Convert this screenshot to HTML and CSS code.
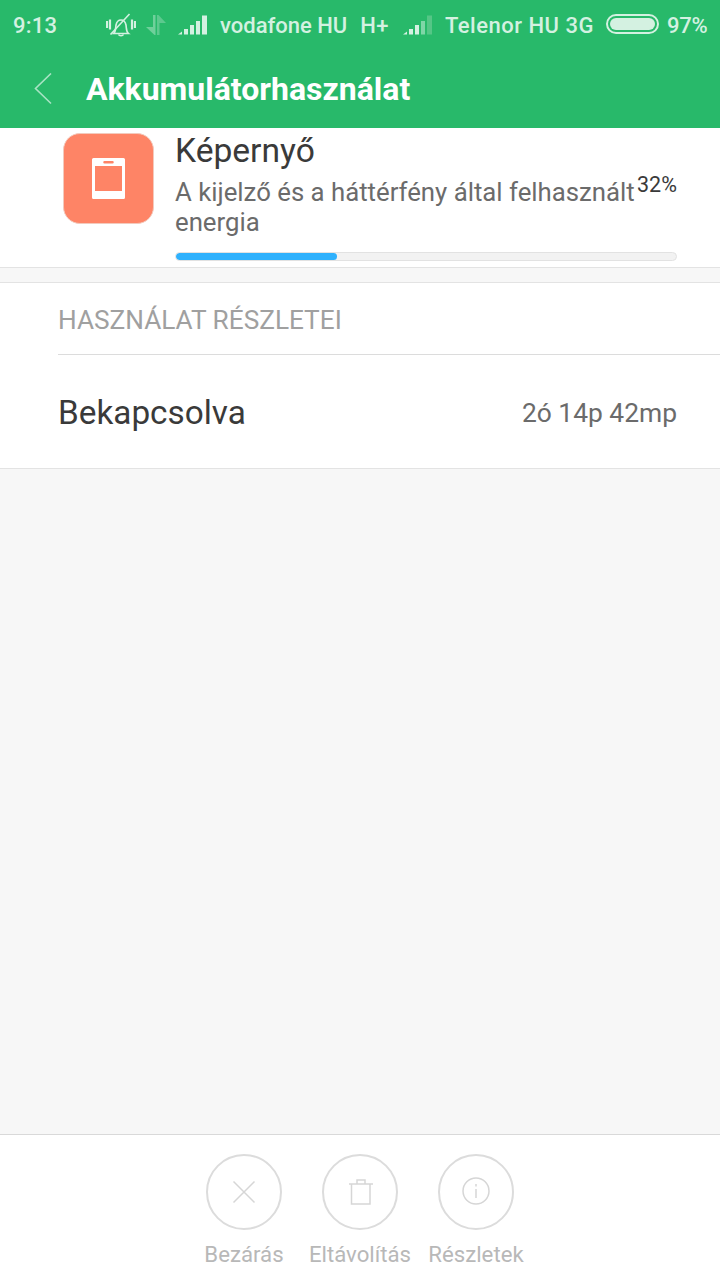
FILE: index.html
```html
<!DOCTYPE html>
<html lang="hu">
<head>
<meta charset="utf-8">
<title>Akkumulátorhasználat</title>
<link rel="stylesheet" href="styles.css">
</head>
<body>
<div class="screen">
  <header class="appbar">
    <div class="status">
      <span class="clock">9:13</span>
      <svg class="ic-bell" width="30" height="24" viewBox="0 0 30 24" fill="none" stroke="#d4f1e1" stroke-width="1.6">
        <path d="M7.500 20.500c2.500-2 2-5.500 2.500-8.500.6-3 2.600-5 5-5s4.400 2 5 5c.5 3 0 6.500 2.500 8.500z"/>
        <path d="M12.500 21.500c.8 1.600 4.200 1.600 5 0"/>
        <path d="M4.500 21.500 23.500 1"/>
        <path d="M1 8v7M4 6.500v10M26 6.500v10M29 8v7" stroke-width="2.200"/>
      </svg>
      <svg class="ic-data" width="20" height="20" viewBox="0 0 20 20">
        <path d="M7 0h2.500v20H8.500L0 12h7z" fill="#6fd09b"/>
        <path d="M11 0h1.500L20 8h-6.500v12H11z" fill="#5cc98e"/>
      </svg>
      <svg class="ic-signal" width="31" height="20" viewBox="0 0 31 20" fill="#d4f1e1">
        <path d="M1 19.500l4-3v3zM7 14h4v5.500H7zM13 10h4v9.500h-4zM19 6h4v13.500h-4zM25 .5h5v19h-5z"/>
      </svg>
      <span class="carrier first">vodafone HU</span>
      <span class="carrier net">H+</span>
      <svg class="ic-signal second" width="31" height="20" viewBox="0 0 31 20">
        <path d="M1 19.500l4-3v3zM7 14h4v5.500H7zM13 10h4v9.500h-4z" fill="#d4f1e1"/>
        <path d="M19 6h4v13.500h-4z" fill="#7fd6a7"/>
        <path d="M25 .5h5v19h-5z" fill="#55c686"/>
      </svg>
      <span class="carrier second-name">Telenor HU 3G</span>
      <span class="battery"><span class="battery-fill"></span></span>
      <span class="percent">97%</span>
    </div>
    <div class="titlebar">
      <svg class="back" width="20" height="32" viewBox="0 0 20 32" fill="none" stroke="#a9e3c4" stroke-width="1.600">
        <path d="M18 .5 2.500 15.500 18 30.500"/>
      </svg>
      <h1 class="title">Akkumulátorhasználat</h1>
    </div>
  </header>

  <section class="usage">
    <div class="app-icon">
      <svg width="33" height="41" viewBox="0 0 33 41">
        <path fill-rule="evenodd" fill="#fff" d="M1.500 0h30A1.500 1.500 0 0 1 33 1.500v38a1.500 1.500 0 0 1-1.500 1.500h-30A1.500 1.500 0 0 1 0 39.500v-38A1.500 1.500 0 0 1 1.500 0zM3 8v25h27V8zM12.500 3a1 1 0 0 0 0 2.500h8a1 1 0 0 0 0-2.500z"/>
      </svg>
    </div>
    <div class="usage-body">
      <div class="usage-name">Képernyő</div>
      <div class="usage-row">
        <p class="usage-desc">A kijelző és a háttérfény által felhasznált energia</p>
        <span class="usage-pct">32%</span>
      </div>
      <div class="bar"><div class="bar-fill" style="width:32.2%"></div></div>
    </div>
  </section>

  <section class="details">
    <h2 class="details-head">HASZNÁLAT RÉSZLETEI</h2>
    <div class="details-row">
      <span class="row-label">Bekapcsolva</span>
      <span class="row-value">2ó 14p 42mp</span>
    </div>
  </section>

  <div class="spacer"></div>

  <footer class="actions">
    <div class="action">
      <span class="circle">
        <svg width="30" height="30" viewBox="0 0 30 30" fill="none" stroke="#d6d6d6" stroke-width="1.500"><path d="M4.500 4.500l21 21M25.500 4.500l-21 21"/></svg>
      </span>
      <span class="action-label">Bezárás</span>
    </div>
    <div class="action">
      <span class="circle">
        <svg width="30" height="30" viewBox="0 0 30 30" fill="none" stroke="#d6d6d6" stroke-width="1.500"><path d="M4 7h24M6.500 7v20h18.500V7M12 7V3h8v4"/></svg>
      </span>
      <span class="action-label">Eltávolítás</span>
    </div>
    <div class="action">
      <span class="circle">
        <svg width="30" height="30" viewBox="0 0 30 30" fill="none" stroke="#d6d6d6" stroke-width="1.500"><circle cx="15" cy="14" r="13"/><path d="M15 12v9M15 7v2.500"/></svg>
      </span>
      <span class="action-label">Részletek</span>
    </div>
  </footer>
</div>
</body>
</html>
```
FILE: styles.css
```css
* { box-sizing: border-box; }

html, body {
  margin: 0;
  padding: 0;
}

body {
  font-family: Roboto, "Noto Sans", sans-serif;
  background: #f7f7f7;
}

.screen {
  width: 720px;
  height: 1280px;
  display: flex;
  flex-direction: column;
  overflow: hidden;
}

/* Green header with the status strip */
.appbar {
  background: #28b96a;
  height: 128px;
  flex: none;
}

.status {
  height: 50px;
  display: flex;
  align-items: center;
  color: #d4f1e1;
  font-size: 22px;
  font-weight: 500;
  padding-left: 13px;
}

.clock { width: 93px; letter-spacing: .2px; }
.ic-bell { margin-right: 10px; flex: none; }
.ic-data { margin-right: 11px; flex: none; }
.ic-signal { flex: none; }
.carrier { white-space: nowrap; }
.first { margin-left: 12px; }
.net { margin-left: 13px; letter-spacing: .4px; }
.second { margin-left: 13px; }
.second-name { margin-left: 12px; letter-spacing: .5px; }

.battery {
  width: 53px;
  height: 20px;
  margin-left: 12px;
  margin-bottom: 2px;
  border: 2px solid #d4f1e1;
  border-radius: 10px;
  padding: 2px;
  display: block;
  flex: none;
}

.battery-fill {
  display: block;
  height: 100%;
  background: #d4f1e1;
  border-radius: 6px;
}

.percent { margin-left: 8px; letter-spacing: -.2px; }

.titlebar {
  height: 78px;
  display: flex;
  align-items: center;
  padding-left: 33px;
}

.back { margin-right: 33px; flex: none; }

.title {
  margin: 0;
  color: #fff;
  font-size: 32px;
  font-weight: 700;
  line-height: 1;
}

/* Battery consumer summary */
.usage {
  flex: none;
  height: 140px;
  background: #fff;
  border-bottom: 1px solid #e3e3e3;
  display: flex;
  align-items: flex-start;
  padding: 5px 43px 0 63px;
}

.app-icon {
  width: 91px;
  height: 91px;
  flex: none;
  background: #fe8466;
  border-radius: 17px;
  border: 1px solid #f3cabd;
  display: flex;
  align-items: center;
  justify-content: center;
}

.usage-body {
  flex: 1;
  margin-left: 21px;
  min-width: 0;
}

.usage-name {
  font-size: 33.6px;
  line-height: 36px;
  color: #3a3a3a;
}

.usage-row {
  display: flex;
  align-items: flex-start;
  margin-top: 8px;
}

.usage-desc {
  margin: 0;
  width: 462px;
  font-size: 25.75px;
  line-height: 30px;
  color: #6b6b6b;
}

.usage-pct {
  font-size: 21.5px;
  line-height: 24px;
  color: #3a3a3a;
  margin-top: -4px;
  white-space: nowrap;
}

.bar {
  height: 9px;
  margin-top: 15px;
  background: #f2f2f2;
  border: 1px solid #e2e2e2;
  border-radius: 5px;
  overflow: hidden;
}

.bar-fill {
  height: 100%;
  background: #2fb1fd;
  border-radius: 5px;
}

/* Usage detail list */
.details {
  flex: none;
  height: 187px;
  margin-top: 14px;
  background: #fff;
  border-top: 1px solid #e3e3e3;
  border-bottom: 1px solid #e3e3e3;
  padding-left: 58px;
}

.details-head {
  margin: 0;
  height: 72px;
  padding-top: 21px;
  font-size: 26.2px;
  line-height: 32px;
  font-weight: 400;
  color: #a0a0a0;
  border-bottom: 1px solid #dcdcdc;
}

.details-row {
  height: 112px;
  padding: 3px 43px 0 0;
  display: flex;
  align-items: center;
  justify-content: space-between;
}

.row-label {
  font-size: 33.3px;
  color: #3a3a3a;
}

.row-value {
  font-size: 26.4px;
  color: #6b6b6b;
}

.spacer { flex: 1; }

/* Bottom action bar */
.actions {
  flex: none;
  height: 146px;
  background: #fff;
  border-top: 1px solid #d9d9d9;
  display: flex;
  justify-content: center;
  padding-top: 19px;
}

.action {
  width: 116px;
  display: flex;
  flex-direction: column;
  align-items: center;
}

.circle {
  width: 76px;
  height: 76px;
  border: 2px solid #dcdcdc;
  border-radius: 50%;
  display: flex;
  align-items: center;
  justify-content: center;
}

.action-label {
  margin-top: 11px;
  font-size: 22.2px;
  line-height: 26px;
  color: #b8b8b8;
  white-space: nowrap;
}
```
